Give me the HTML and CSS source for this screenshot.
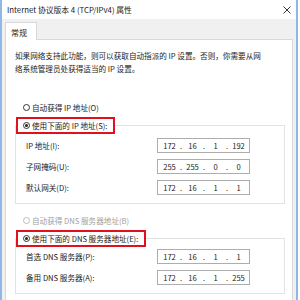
FILE: index.html
```html
<!DOCTYPE html>
<html lang="zh-CN">
<head>
  <meta charset="UTF-8" />
  <title>Internet 协议版本 4 (TCP/IPv4) 属性</title>
  <link rel="stylesheet" href="styles.css">
</head>
<body>
  <div class="window">
    <div class="titlebar">
      <span class="title">Internet 协议版本 4 (TCP/IPv4) 属性</span>
      <svg class="close" width="8" height="8" viewBox="0 0 8 8">
        <path d="M0.5 0.5L7.5 7.5M7.5 0.5L0.5 7.5" stroke="#333" stroke-width="1" fill="none"/>
      </svg>
    </div>

    <div class="tabs">
      <div class="tab">常规</div>
    </div>

    <div class="panel">
      <p class="intro">如果网络支持此功能，则可以获取自动指派的 IP 设置。否则，你需要从网<br>络系统管理员处获得适当的 IP 设置。</p>

      <div class="option first"><span class="radio"></span>自动获得 IP 地址(O)</div>

      <fieldset class="group">
        <legend><span class="mark"><span class="radio on"></span>使用下面的 IP 地址(S):</span></legend>
        <div class="row">
          <span>IP 地址(I):</span>
          <div class="ip"><span class="oct">172</span><span class="dot">.</span><span class="oct">16</span><span class="dot">.</span><span class="oct">1</span><span class="dot">.</span><span class="oct">192</span></div>
        </div>
        <div class="row">
          <span>子网掩码(U):</span>
          <div class="ip"><span class="oct">255</span><span class="dot">.</span><span class="oct">255</span><span class="dot">.</span><span class="oct">0</span><span class="dot">.</span><span class="oct">0</span></div>
        </div>
        <div class="row">
          <span>默认网关(D):</span>
          <div class="ip"><span class="oct">172</span><span class="dot">.</span><span class="oct">16</span><span class="dot">.</span><span class="oct">1</span><span class="dot">.</span><span class="oct">1</span></div>
        </div>
      </fieldset>

      <div class="option off"><span class="radio"></span>自动获得 DNS 服务器地址(B)</div>

      <fieldset class="group dns">
        <legend><span class="mark"><span class="radio on"></span>使用下面的 DNS 服务器地址(E):</span></legend>
        <div class="row">
          <span>首选 DNS 服务器(P):</span>
          <div class="ip"><span class="oct">172</span><span class="dot">.</span><span class="oct">16</span><span class="dot">.</span><span class="oct">1</span><span class="dot">.</span><span class="oct">1</span></div>
        </div>
        <div class="row">
          <span>备用 DNS 服务器(A):</span>
          <div class="ip"><span class="oct">172</span><span class="dot">.</span><span class="oct">16</span><span class="dot">.</span><span class="oct">1</span><span class="dot">.</span><span class="oct">255</span></div>
        </div>
      </fieldset>
    </div>
  </div>
</body>
</html>
```

FILE: styles.css
```css
body {
  margin: 0;
  background: #fff;
  font-family: "Noto Sans CJK SC", "Noto Sans", sans-serif;
  font-size: 7.6px;
  color: #1a1a1a;
}
.window {
  width: 294px;
  height: 300px;
  overflow: hidden;
  background: #f0f0f0;
  border-left: 2px solid #8fb8e6;
  border-right: 2px solid #8fb8e6;
}
.titlebar {
  height: 19px;
  background: #fff;
  display: flex;
  align-items: center;
  justify-content: space-between;
  padding: 0 5px 0 5px;
}
.title {
  font-size: 7.8px;
}
.tabs {
  display: flex;
  padding: 3px 0 0 3px;
}
.tab {
  width: 32px;
  height: 18px;
  box-sizing: border-box;
  background: #fff;
  border: 1px solid #d9d9d9;
  border-bottom: none;
  margin-bottom: -1px;
  padding: 4px 0 0 5px;
  font-size: 8px;
  position: relative;
}
.panel {
  margin: 0 3px;
  height: 260px;
  background: #fff;
  border: 1px solid #d9d9d9;
  padding: 9px 7px 0 9px;
}
.intro {
  margin: 0;
  line-height: 13px;
}
.option {
  display: flex;
  align-items: center;
  height: 13px;
  padding-left: 8px;
}
.option.first {
  margin-top: 26px;
}
.option.off {
  color: #a0a0a0;
  margin-top: 10px;
}
.radio {
  width: 7px;
  height: 7px;
  box-sizing: border-box;
  border: 1px solid #333;
  border-radius: 50%;
  background: #fff;
  margin-right: 2px;
  display: flex;
  align-items: center;
  justify-content: center;
}
.off .radio {
  border-color: #bcbcbc;
}
.radio.on::after {
  content: "";
  width: 3px;
  height: 3px;
  border-radius: 50%;
  background: #222;
}
.group {
  margin: 3px 0 0 0;
  padding: 0 0 8px 0;
  border: 1px solid #e3e3e3;
  min-width: 0;
}
.group legend {
  padding: 0;
  margin-left: 0;
}
.mark {
  display: flex;
  align-items: center;
  height: 13px;
  border: 2px solid #e0101e;
  padding: 0 6px 0 5px;
}
.row {
  display: flex;
  align-items: center;
  justify-content: space-between;
  height: 15px;
  padding-left: 10px;
  margin-top: 6px;
}
.group .row:first-of-type {
  margin-top: 4px;
}
.dns .row:first-of-type {
  margin-top: 2px;
}
.ip {
  width: 93px;
  height: 15px;
  box-sizing: border-box;
  border: 1px solid #adadad;
  margin-right: 34px;
  display: flex;
  align-items: center;
  padding-left: 2px;
}
.oct {
  width: 19px;
  text-align: center;
}
.dot {
  width: 4px;
  text-align: center;
}
```
